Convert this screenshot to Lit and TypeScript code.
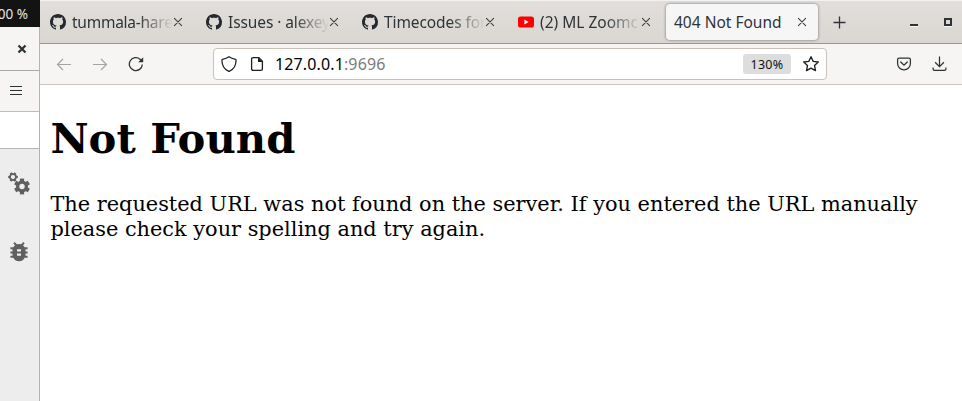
import { LitElement, html, css, svg } from "lit";
import { customElement } from "lit/decorators.js";

const github = html`<svg class="fav" viewBox="0 0 16 16"><path fill="#24292f" d="M8 0C3.58 0 0 3.58 0 8c0 3.54 2.29 6.53 5.47 7.59.4.07.55-.17.55-.38 0-.19-.01-.82-.01-1.49-2.01.37-2.53-.49-2.69-.94-.09-.23-.48-.94-.82-1.13-.28-.15-.68-.52-.01-.53.63-.01 1.08.58 1.23.82.72 1.21 1.87.87 2.33.66.07-.52.28-.87.51-1.07-1.78-.2-3.64-.89-3.64-3.95 0-.87.31-1.59.82-2.15-.08-.2-.36-1.02.08-2.12 0 0 .67-.21 2.2.82.64-.18 1.32-.27 2-.27s1.36.09 2 .27c1.53-1.04 2.2-.82 2.2-.82.44 1.1.16 1.92.08 2.12.51.56.82 1.27.82 2.15 0 3.07-1.87 3.75-3.65 3.95.29.25.54.73.54 1.48 0 1.07-.01 1.93-.01 2.2 0 .21.15.46.55.38A8.01 8.01 0 0 0 16 8c0-4.42-3.58-8-8-8z"/></svg>`;
const youtube = html`<svg class="fav" viewBox="0 0 16 16"><rect y="2.4" width="16" height="11.2" rx="2.6" fill="#f00"/><path fill="#fff" d="M6.4 5.6v4.8L10.6 8z"/></svg>`;
const cross = html`<svg class="close" viewBox="0 0 10 10"><path d="M1.4 1.4l7.200 7.200M8.600 1.400l-7.200 7.200" stroke="#3b4043" stroke-width="1.100" stroke-linecap="round"/></svg>`;

const gear = (cx: number, cy: number, r: number, hole: number, tooth: number, turn: number) => svg`
  <g transform="translate(${cx} ${cy}) rotate(${turn})">
    <circle r=${(r + hole) / 2} fill="none" stroke="#5f5f5f" stroke-width=${r - hole} />
    ${[0, 60, 120, 180, 240, 300].map(
      (a) => svg`<rect x=${-tooth / 2} y=${-r - tooth * 0.45} width=${tooth} height=${tooth * 0.75} fill="#5f5f5f" transform="rotate(${a})" />`
    )}
  </g>`;

const tabs = [
  { icon: github, title: "tummala-hare", cls: "t1" },
  { icon: github, title: "Issues · alexey", cls: "t2" },
  { icon: github, title: "Timecodes for", cls: "t3" },
  { icon: youtube, title: "(2) ML Zoomc", cls: "t4" },
];

@customElement("app-root")
export class AppRoot extends LitElement {
  static styles = css`
    :host { display: flex; width: 962px; height: 401px; overflow: hidden; background: #fff; font-family: "Noto Sans", sans-serif; color: #2e3436; }
    * { box-sizing: border-box; }
    svg { display: block; flex: none; fill: none; }
    .behind { width: 40px; flex: none; display: flex; flex-direction: column; }
    .clock { height: 27px; flex: none; background: #131313; color: #e6e6e6; font-size: 13.5px; line-height: 28px; white-space: nowrap; display: flex; justify-content: flex-end; padding-right: 12px; overflow: hidden; }
    .rest { flex: 1; display: flex; flex-direction: column; border-right: 1px solid #b3b3b3; background: #ededed; }
    .title { height: 44px; border-bottom: 1px solid #a9a9a9; background: #f6f5f4; padding: 17px 0 0 17px; }
    .menu { height: 41px; border-bottom: 1px solid #bfbcb8; background: #f6f5f4; padding: 14px 0 0 10px; }
    .blank { height: 37px; border-bottom: 1px solid #b5b5b5; background: #fff; }
    .gears { margin: 22px 0 0 7px; }
    .bug { margin: 47px 0 0 9px; }
    .browser { flex: 1; min-width: 0; display: flex; flex-direction: column; }
    .tabbar { height: 44px; flex: none; display: flex; border-top: 1px solid #f3f2f1; border-bottom: 1px solid #999590; background: linear-gradient(#e1dedb, #dad6d2); padding-left: 2px; }
    .tab { width: 156px; height: 42px; flex: none; display: flex; align-items: center; padding-left: 8px; }
    .fav { width: 16px; height: 16px; margin-right: 6px; }
    .label { width: 101px; flex: none; overflow: hidden; white-space: nowrap; font-size: 15.5px; line-height: 24px; -webkit-mask-image: linear-gradient(to right, #000 65%, transparent 100%); mask-image: linear-gradient(to right, #000 65%, transparent 100%); }
    .t1 { letter-spacing: -0.25px; }
    .t2, .t3 { letter-spacing: -0.1px; }
    .t4 { letter-spacing: 0; }
    .close { width: 10px; height: 10px; }
    .active { width: 152px; height: 36px; margin: 3px 0 0; background: #f6f6f6; border-radius: 4px; box-shadow: 0 0 3px rgba(0, 0, 0, .5); justify-content: space-between; padding: 0 11px 0 8px; }
    .name { font-size: 15.5px; line-height: 24px; white-space: nowrap; }
    .plus { margin: 15px 0 0 15px; }
    .min { width: 8px; height: 2px; background: #2e3436; margin: 23px 0 0 auto; box-shadow: 0 1px #f5f5f5; }
    .max { width: 8px; height: 8px; border: 2px solid #2e3436; margin: 17px 10px 0 26px; box-shadow: 0 1px #f5f5f5; }
    .toolbar { height: 41px; flex: none; display: flex; align-items: center; background: #f6f5f4; border-bottom: 1px solid #cbc5bd; padding-left: 16px; }
    .fwd, .reload { margin-left: 20px; }
    .url { width: 614px; height: 32px; margin-left: 69px; background: #fff; border: 1px solid #c8c2bb; border-radius: 4px; display: flex; align-items: center; padding: 0 7px; }
    .page-icon { margin-left: 12px; }
    .addr { margin-left: 10px; font-size: 16px; line-height: 24px; color: #000; white-space: nowrap; letter-spacing: 0.13px; }
    .port { color: #7b7b7b; }
    .zoom { margin-left: auto; width: 48px; height: 20px; margin-right: 12px; border-radius: 3px; background: #dddddd; color: #111; font-size: 12.5px; line-height: 21px; letter-spacing: 0.3px; text-align: center; }
    .pocket { margin-left: 69px; }
    .down { margin-left: 19px; }
    .content { flex: 1; padding: 29px 10.4px; color: #000; font-family: "DejaVu Serif", serif; }
    h1 { font-size: 41.75px; line-height: 49px; margin: 0 0 29px; font-weight: bold; }
    p { font-size: 20.87px; line-height: 25px; margin: 0; }
  `;

  render() {
    return html`
      <div class="behind">
        <div class="clock">100 %</div>
        <div class="rest">
          <div class="title"><svg width="10" height="10"><path d="M1.5 1.5l7 7M8.5 1.5l-7 7" stroke="#2e3436" stroke-width="2.3"/></svg></div>
          <div class="menu"><svg width="12" height="12"><path d="M0 1.5h12M0 5.5h12M0 9.5h12" stroke="#2e3436" stroke-width="1.2"/></svg></div>
          <div class="blank"></div>
          <svg class="gears" width="24" height="24">${gear(6, 6, 3.8, 2.1, 2.2, 30)}${gear(15, 15.5, 6, 2.7, 4.2, 0)}</svg>
          <svg class="bug" width="20" height="21" viewBox="0 0 20 20" preserveAspectRatio="none"><path fill="#5f5f5f" fill-rule="evenodd" d="M18.6 5h-2.9a6 6 0 0 0-1.7-2l1.7-1.600L14.300 0 12.100 2.200a6.300 6.300 0 0 0-4.200 0L5.700 0 4.300 1.400 6 3a6 6 0 0 0-1.700 2H1.400v2h2.100v2H1.400v2h2.100v2H1.400v2h2.900a6.500 6.500 0 0 0 11.400 0h2.900v-2h-2.100v-2h2.100V9h-2.100V7h2.100zM8 7h4v2H8zm0 4h4v2H8z"/></svg>
        </div>
      </div>
      <div class="browser">
        <div class="tabbar">
          ${tabs.map((t) => html`<div class="tab">${t.icon}<span class="label ${t.cls}">${t.title}</span>${cross}</div>`)}
          <div class="tab active"><span class="name">404 Not Found</span>${cross}</div>
          <svg class="plus" width="13" height="13"><path d="M6.5 .5v12M.5 6.5h12" stroke="#2e3436" stroke-width="1.3"/></svg>
          <div class="min"></div>
          <div class="max"></div>
        </div>
        <div class="toolbar">
          <svg width="16" height="16"><path d="M15 8.500H1.500M7 3L1.500 8.500 7 14" stroke="#a3a5a5" stroke-width="1.200"/></svg>
          <svg class="fwd" width="16" height="16"><path d="M1 8.500h13.500M9 3L14.500 8.500 9 14" stroke="#a3a5a5" stroke-width="1.200"/></svg>
          <svg class="reload" width="16" height="16"><path d="M14.300 8.500a6.500 6.500 0 1 1-2.200-5.300l1.500 1.400" stroke="#2e3436" stroke-width="1.300"/><path d="M15.200 1.300v5h-5z" fill="#2e3436"/></svg>
          <div class="url">
            <svg width="16" height="16"><path d="M8 .8C6 2.300 3.800 2.900 1.500 3.300c-.5.100-.6.400-.6.800.100 5.300 2.200 9.200 6.500 11 .4.200.8.200 1.200 0 4.300-1.800 6.400-5.700 6.500-11 0-.4-.1-.7-.6-.8C12.200 2.900 10 2.300 8 .8z" stroke="#1c1f20" stroke-width="1.250"/></svg>
            <svg class="page-icon" width="16" height="16"><path d="M4.200 1.600h5.600l3.600 3.600v7.600q0 1.600-1.600 1.600H4.200q-1.600 0-1.600-1.600V3.200q0-1.600 1.600-1.600z" stroke="#1c1f20" stroke-width="1.300"/><path d="M9 1.500v4.500h4.500z" fill="#1c1f20"/></svg>
            <div class="addr">127.0.0.1<span class="port">:9696</span></div>
            <div class="zoom">130%</div>
            <svg width="16" height="16"><path d="M8 .7l2.200 4.700 5.100.6-3.800 3.500 1 5.100L8 12.100l-4.500 2.500 1-5.100L.7 6l5.100-.6z" stroke="#1c1f20" stroke-width="1.300" stroke-linejoin="round"/></svg>
          </div>
          <svg class="pocket" width="16" height="16"><path d="M3 2.200h10q1.400 0 1.400 1.400V7.500a6.400 6.400 0 0 1-12.800 0V3.600Q1.600 2.200 3 2.200z" stroke="#2e3436" stroke-width="1.250"/><path d="M4.700 6L8 9.200 11.300 6" stroke="#2e3436" stroke-width="1.300" stroke-linecap="round"/></svg>
          <svg class="down" width="16" height="16"><path d="M8.500 .5v10M4.100 6.300l4.400 4.400 4.400-4.400" stroke="#2e3436" stroke-width="1.250"/><path d="M2.100 11.500v1.600q0 1.300 1.300 1.300h10.200q1.300 0 1.300-1.300v-1.600" stroke="#2e3436" stroke-width="1.250"/></svg>
        </div>
        <div class="content">
          <h1>Not Found</h1>
          <p>The requested URL was not found on the server. If you entered the URL manually please check your spelling and try again.</p>
        </div>
      </div>`;
  }
}
